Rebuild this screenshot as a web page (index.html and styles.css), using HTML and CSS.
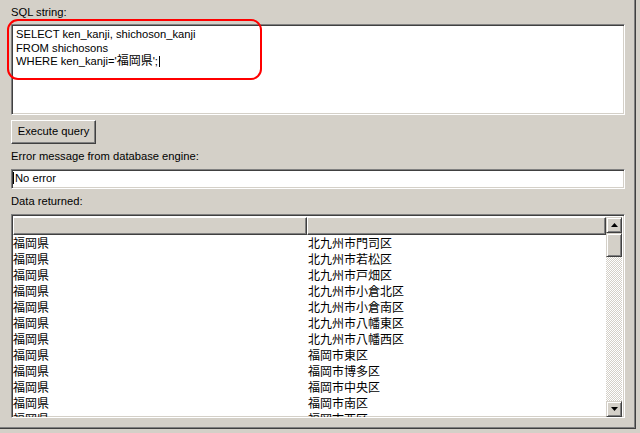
FILE: index.html
```html
<!DOCTYPE html>
<html>
<head>
<meta charset="utf-8">
<link rel="stylesheet" href="styles.css">
</head>
<body>
<div class="panel">
  <div class="label label-first">SQL string:</div>
  <div class="sql sunken">
    <div>SELECT ken_kanji, shichoson_kanji</div>
    <div>FROM shichosons</div>
    <div>WHERE ken_kanji='<span class="jp">福岡県</span>';<span class="caret"></span></div>
  </div>
  <div class="btn">Execute query</div>
  <div class="label label-mid">Error message from database engine:</div>
  <div class="field sunken"><span class="caret caret-field"></span>No error</div>
  <div class="label label-mid">Data returned:</div>
  <div class="list sunken">
    <div class="list-main">
      <div class="list-head">
        <div class="head-cell"></div>
        <div class="head-cell"></div>
      </div>
      <div class="rows">
        <div class="row"><span>福岡県</span><span class="c2">北九州市門司区</span></div>
        <div class="row"><span>福岡県</span><span class="c2">北九州市若松区</span></div>
        <div class="row"><span>福岡県</span><span class="c2">北九州市戸畑区</span></div>
        <div class="row"><span>福岡県</span><span class="c2">北九州市小倉北区</span></div>
        <div class="row"><span>福岡県</span><span class="c2">北九州市小倉南区</span></div>
        <div class="row"><span>福岡県</span><span class="c2">北九州市八幡東区</span></div>
        <div class="row"><span>福岡県</span><span class="c2">北九州市八幡西区</span></div>
        <div class="row"><span>福岡県</span><span class="c2">福岡市東区</span></div>
        <div class="row"><span>福岡県</span><span class="c2">福岡市博多区</span></div>
        <div class="row"><span>福岡県</span><span class="c2">福岡市中央区</span></div>
        <div class="row"><span>福岡県</span><span class="c2">福岡市南区</span></div>
        <div class="row"><span>福岡県</span><span class="c2">福岡市西区</span></div>
      </div>
    </div>
    <div class="scrollbar">
      <div class="sb-btn"><svg width="7" height="4" viewBox="0 0 7 4"><polygon points="3.5,0 7,4 0,4" fill="#000"/></svg></div>
      <div class="sb-thumb"></div>
      <div class="sb-track"></div>
      <div class="sb-btn"><svg width="7" height="4" viewBox="0 0 7 4"><polygon points="0,0 7,0 3.5,4" fill="#000"/></svg></div>
    </div>
  </div>
  <div class="annotation"></div>
</div>
</body>
</html>
```

FILE: styles.css
```css
html, body {
  margin: 0;
  padding: 0;
}
body {
  width: 640px;
  height: 433px;
  overflow: hidden;
  background: #d4d0c8;
  font-family: "Liberation Sans", "Noto Sans CJK JP", Arial, sans-serif;
  font-size: 11.2px;
  color: #000;
}
.panel {
  position: relative;
  box-sizing: border-box;
  width: 636px;
  height: 429px;
  padding: 5px 10px 0 11px;
  border-right: 1px solid #404040;
  border-bottom: 1px solid #404040;
  box-shadow: inset -1px -1px #808080;
  display: flex;
  flex-direction: column;
}
.label {
  height: 14px;
  line-height: 14px;
  white-space: nowrap;
}
.label-first {
  margin-bottom: 5px;
}
.label-mid {
  margin-top: 5px;
  margin-bottom: 6px;
}
.sunken {
  box-sizing: border-box;
  background: #fff;
  border: 1px solid;
  border-color: #808080 #fff #fff #808080;
  box-shadow: inset 1px 1px #404040, inset -1px -1px #d4d0c8;
}
.sql {
  height: 91px;
  padding: 3px 3px 0 4px;
  line-height: 13.5px;
  white-space: nowrap;
}
.jp {
  font-family: "Noto Sans CJK JP", sans-serif;
  font-size: 12px;
  line-height: 10px;
}
.caret {
  display: inline-block;
  width: 1px;
  height: 11px;
  background: #000;
  vertical-align: -2px;
  margin-left: 1px;
}
.btn {
  box-sizing: border-box;
  width: 85px;
  height: 24px;
  margin-top: 5px;
  line-height: 21px;
  text-align: center;
  background: #d4d0c8;
  border: 1px solid;
  border-color: #fff #404040 #404040 #fff;
  box-shadow: inset -1px -1px #808080;
}
.field {
  height: 20px;
  line-height: 17px;
  padding-left: 1px;
  white-space: nowrap;
}
.caret-field {
  margin-left: 0;
  margin-right: 1px;
  height: 12px;
}
.list {
  height: 204px;
  padding: 2px 0 0 1px;
  display: flex;
  overflow: hidden;
}
.list-main {
  flex: 1;
  display: flex;
  flex-direction: column;
  min-width: 0;
}
.list-head {
  display: grid;
  grid-template-columns: 294px 1fr;
  height: 18px;
  flex: none;
}
.head-cell {
  box-sizing: border-box;
  background: #d4d0c8;
  border: 1px solid;
  border-color: #fff #404040 #404040 #fff;
  box-shadow: inset -1px -1px #808080;
}
.rows {
  flex: 1;
  overflow: hidden;
  font-family: "Noto Sans CJK JP", sans-serif;
  font-size: 12px;
}
.row {
  display: grid;
  grid-template-columns: 294px 1fr;
  height: 16px;
  line-height: 16px;
  white-space: nowrap;
}
.c2 {
  padding-left: 1px;
}
.scrollbar {
  width: 16px;
  height: 200px;
  flex: none;
  display: flex;
  flex-direction: column;
  margin-right: 2px;
}
.sb-btn, .sb-thumb {
  box-sizing: border-box;
  background: #d4d0c8;
  border: 1px solid;
  border-color: #d4d0c8 #404040 #404040 #d4d0c8;
  box-shadow: inset 1px 1px #fff, inset -1px -1px #808080;
  flex: none;
}
.sb-btn {
  height: 16px;
  display: flex;
  align-items: center;
  justify-content: center;
}
.sb-btn svg {
  display: block;
}
.sb-thumb {
  height: 24px;
}
.sb-track {
  flex: 1;
  background-color: #d4d0c8;
  background-image: repeating-conic-gradient(#fff 0 25%, #d4d0c8 0 50%);
  background-size: 2px 2px;
}
.annotation {
  position: absolute;
  left: 7px;
  top: 19px;
  width: 255px;
  height: 61px;
  box-sizing: border-box;
  border: 2px solid #ff0000;
  border-radius: 11px;
}
```
